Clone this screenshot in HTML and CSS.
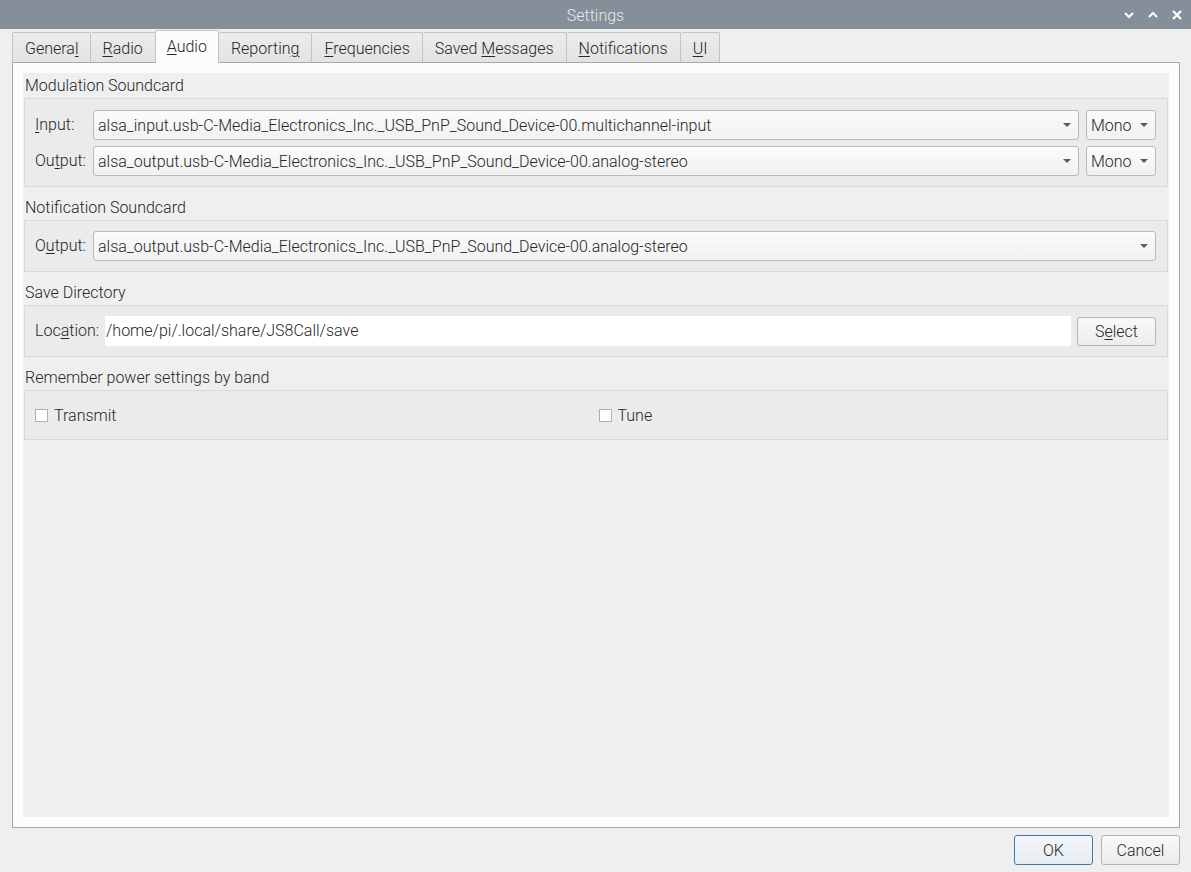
FILE: index.html
```html
<!DOCTYPE html>
<html>
<head>
<meta charset="utf-8">
<link rel="stylesheet" href="styles.css">
</head>
<body>
<div class="window">
  <div class="titlebar">
    <div class="title">Settings</div>
    <div class="wm-buttons">
      <svg class="wm" width="12" height="12" viewBox="0 0 12 12"><path d="M2 4 L6 8 L10 4" fill="none" stroke="#fff" stroke-width="2"/></svg>
      <svg class="wm" width="12" height="12" viewBox="0 0 12 12"><path d="M2 8 L6 4 L10 8" fill="none" stroke="#fff" stroke-width="2"/></svg>
      <svg class="wm" width="12" height="12" viewBox="0 0 12 12"><path d="M2 2 L10 10 M10 2 L2 10" fill="none" stroke="#fff" stroke-width="2.2"/></svg>
    </div>
  </div>
  <div class="client">
    <div class="tabbar">
      <div class="tab first">Genera<u>l</u></div>
      <div class="tab"><u>R</u>adio</div>
      <div class="tab active"><u>A</u>udio</div>
      <div class="tab">Reportin<u>g</u></div>
      <div class="tab"><u>F</u>requencies</div>
      <div class="tab">Saved <u>M</u>essages</div>
      <div class="tab"><u>N</u>otifications</div>
      <div class="tab"><u>U</u>I</div>
    </div>
    <div class="pane">
      <div class="inner">
        <div class="ghead first">Modulation Soundcard</div>
        <div class="gbox grid3">
          <div class="label"><u>I</u>nput:</div>
          <div class="combo"><span class="ctext">alsa_input.usb-C-Media_Electronics_Inc._USB_PnP_Sound_Device-00.multichannel-input</span><span class="arrow"></span></div>
          <div class="combo mono"><span class="ctext">Mono</span><span class="arrow"></span></div>
          <div class="label">Ou<u>t</u>put:</div>
          <div class="combo"><span class="ctext">alsa_output.usb-C-Media_Electronics_Inc._USB_PnP_Sound_Device-00.analog-stereo</span><span class="arrow"></span></div>
          <div class="combo mono"><span class="ctext">Mono</span><span class="arrow"></span></div>
        </div>
        <div class="ghead">Notification Soundcard</div>
        <div class="gbox row">
          <div class="label">O<u>u</u>tput:</div>
          <div class="combo grow"><span class="ctext">alsa_output.usb-C-Media_Electronics_Inc._USB_PnP_Sound_Device-00.analog-stereo</span><span class="arrow"></span></div>
        </div>
        <div class="ghead">Save Directory</div>
        <div class="gbox row">
          <div class="label">Loc<u>a</u>tion:</div>
          <div class="lineedit">/home/pi/.local/share/JS8Call/save</div>
          <div class="button select">S<u>e</u>lect</div>
        </div>
        <div class="ghead">Remember power settings by band</div>
        <div class="gbox checks">
          <div class="check"><span class="cbox"></span>Transmit</div>
          <div class="check"><span class="cbox"></span>Tune</div>
        </div>
      </div>
    </div>
    <div class="buttons">
      <div class="button ok">OK</div>
      <div class="button">Cancel</div>
    </div>
  </div>
</div>
</body>
</html>
```
FILE: styles.css
```css
* { box-sizing: border-box; }
html, body { margin: 0; padding: 0; }
body {
  width: 1191px;
  height: 872px;
  overflow: hidden;
  background: #efefef;
  font-family: Roboto, "Liberation Sans", sans-serif;
  font-size: 16px;
  font-weight: 300;
  color: #262626;
}
u { text-decoration: underline; text-underline-offset: 2px; text-decoration-thickness: 1px; }
.window { width: 1191px; height: 872px; display: flex; flex-direction: column; }
.titlebar {
  height: 29px;
  background: #858f99;
  position: relative;
  display: flex;
  align-items: center;
  justify-content: center;
  flex: none;
  padding-top: 2px;
}
.title { color: #e6e9ec; }
.wm-buttons {
  position: absolute;
  right: 8px;
  top: 9px;
  display: flex;
  gap: 12px;
}
.wm { display: block; }
.client {
  flex: 1;
  padding: 1px 11px 0 12px;
  display: flex;
  flex-direction: column;
}
.tabbar {
  display: flex;
  align-items: flex-end;
  height: 33px;
  position: relative;
  z-index: 2;
  margin-bottom: -1px;
}
.tab {
  height: 30px;
  margin-bottom: 1px;
  padding: 1px 12px 0 12px;
  line-height: 29px;
  background: linear-gradient(#ececec, #e3e3e3);
  border: 1px solid #c4c4c4;
  border-bottom: none;
  border-left: none;
  border-radius: 2px 2px 0 0;
  white-space: nowrap;
}
.tab.first { border-left: 1px solid #c4c4c4; padding-right: 11px; }
.tab.active {
  height: 33px;
  margin-bottom: 0;
  background: #fcfcfc;
  border: 1px solid #c4c4c4;
  border-bottom: none;
  line-height: 31px;
  padding: 0 11px;
  margin-left: -1px;
}
.pane {
  height: 766px;
  border: 1px solid #a9a9a9;
  background: #fcfcfc;
  padding: 10px;
  flex: none;
}
.inner {
  height: 100%;
  background: #efefef;
  padding: 0 1px;
  display: flex;
  flex-direction: column;
}
.ghead {
  height: 25px;
  line-height: 25px;
  padding-left: 1px;
  margin-top: 8px;
}
.ghead.first { margin-top: 0; }
.gbox {
  border: 1px solid #d9d9d9;
  background: #ebebeb;
  padding: 10px 11px 10px 10px;
}
.grid3 {
  display: grid;
  grid-template-columns: 52px 1fr 70px;
  column-gap: 6px;
  row-gap: 6px;
  padding-top: 11px;
}
.row {
  display: flex;
  align-items: center;
  gap: 6px;
}
.label { height: 30px; line-height: 30px; white-space: nowrap; width: 52px; flex: none; }
.grid3 .label { width: auto; }
.grid3 .combo { margin-right: 1px; }
.grid3 .combo.mono { margin-right: 0; }
.combo {
  height: 30px;
  border: 1px solid #bababa;
  border-radius: 3px;
  background: linear-gradient(#fbfbfb, #f1f1f1);
  display: flex;
  align-items: center;
  padding: 0 7px 0 4px;
  min-width: 0;
}
.combo.grow { flex: 1; }
.ctext { flex: 1; white-space: nowrap; overflow: hidden; }
.arrow {
  width: 0; height: 0;
  border-left: 4px solid transparent;
  border-right: 4px solid transparent;
  border-top: 4px solid #5a5a5a;
  flex: none;
  margin-left: 4px;
}
.mono { padding-left: 4px; padding-right: 7px; }
.lineedit {
  flex: 1;
  height: 30px;
  line-height: 30px;
  background: #ffffff;
  padding-left: 1px;
  white-space: nowrap;
  margin-left: 12px;
}
.button {
  width: 79px;
  height: 30px;
  border: 1px solid #b5b5b5;
  border-radius: 3px;
  background: linear-gradient(#f9f9f9, #ececec);
  display: flex;
  align-items: center;
  justify-content: center;
  flex: none;
}
.button.select { height: 29px; }
.checks {
  display: grid;
  grid-template-columns: 1fr 1fr;
  column-gap: 6px;
  height: 50px;
  align-items: center;
  padding-top: 8px;
  padding-bottom: 8px;
}
.check { display: flex; align-items: center; height: 30px; }
.cbox {
  width: 13px;
  height: 13px;
  border: 1px solid #b0b0b0;
  background: #ffffff;
  margin-right: 6px;
  flex: none;
}
.buttons {
  display: flex;
  justify-content: flex-end;
  gap: 8px;
  margin-top: 7px;
}
.button.ok {
  border-color: #3d7aab;
  background: linear-gradient(#f4f7fa, #e6ecf2);
}
```
